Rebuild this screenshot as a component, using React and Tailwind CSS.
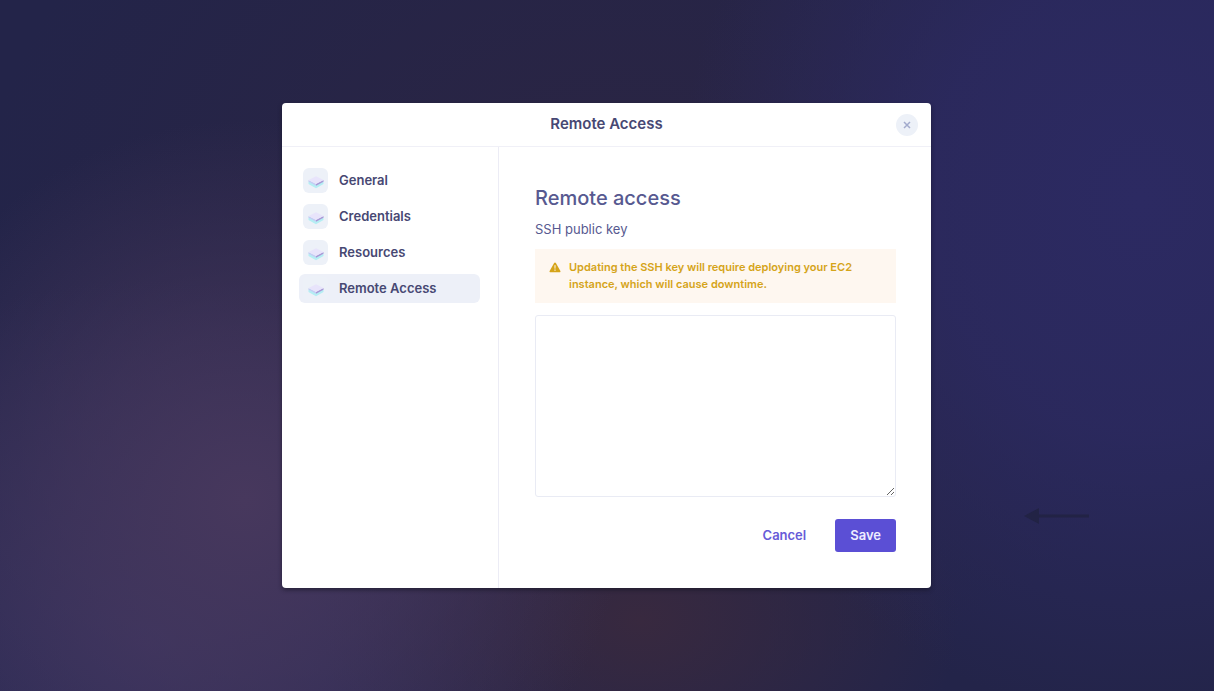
import React from "react";

const sections = ["General", "Credentials", "Resources", "Remote Access"];

function LayerIcon() {
  return (
    <svg viewBox="0 0 16 14" className="mt-0.5 h-3.5 w-4" aria-hidden="true">
      <path d="M.5 6.500 8 10 15.500 6.500 V9 L12 11 8 13.300 4 11 .5 9Z" fill="#b5eef3" />
      <path d="M8 8.700 15.500 5 V6.800 L8 10.800Z" fill="#a798d6" />
      <path d="M.5 5 8 8.700 V10.800 L.5 6.800Z" fill="#c3cdf4" />
      <path d="M8 1.200 15.500 5 8 9 .5 5Z" fill="#e8e4fb" />
    </svg>
  );
}

function SectionLink({ label, active }) {
  return (
    <a
      href="#"
      aria-current={active ? "page" : undefined}
      className={
        active
          ? "flex h-[29px] items-center gap-[11px] rounded-md bg-[#edf0f8] px-1"
          : "flex h-[29px] items-center gap-[11px] rounded-md px-1"
      }
    >
      <span className="flex size-[25px] items-center justify-center rounded-md bg-[#edf1f8]">
        <LayerIcon />
      </span>
      <span className="text-[13px] font-semibold">{label}</span>
    </a>
  );
}

export default function App() {
  return (
    <div className="relative flex min-h-screen items-center justify-center bg-[#232449] bg-[radial-gradient(ellipse_380px_380px_at_245px_500px,#47385d,#47385d99_45%,#47385d00),radial-gradient(ellipse_460px_520px_at_1140px_200px,#2c2a62,#2c2a62cc_45%,#2c2a6200),radial-gradient(ellipse_320px_220px_at_640px_620px,#38293f,#38293f00),radial-gradient(ellipse_460px_360px_at_150px_640px,#35315e,#35315e00),radial-gradient(ellipse_640px_480px_at_620px_220px,#2b2543,#2b254300)] pr-px font-['Inter','Liberation_Sans',sans-serif] text-[#474873]">
      <svg
        viewBox="0 0 66 18"
        className="absolute top-[507px] left-[1024px] h-[18px] w-[66px]"
        aria-hidden="true"
      >
        <path d="M0 9 15 1 V17Z M14 7.500 H65 V10.500 H14Z" fill="#222345" />
      </svg>

      <div
        role="dialog"
        aria-labelledby="dialog-title"
        className="w-full max-w-[649px] overflow-hidden rounded bg-white shadow-[0_2px_4px_rgba(20,20,35,0.6)]"
      >
        <header className="grid grid-cols-[1fr_auto_1fr] items-start border-b border-[#f0f0f7] px-[13px] pt-[11px] pb-2.5">
          <h1 id="dialog-title" className="col-start-2 text-[15px] leading-5 font-semibold">
            Remote Access
          </h1>
          <button
            type="button"
            aria-label="Close"
            className="flex size-[22px] items-center justify-center justify-self-end rounded-full bg-[#edf1f8]"
          >
            <svg viewBox="0 0 8 8" className="size-2" aria-hidden="true">
              <path d="M1 1 7 7 M7 1 1 7" stroke="#a3abcd" strokeWidth="1.500" fill="none" />
            </svg>
          </button>
        </header>

        <div className="flex">
          <nav className="flex w-[217px] shrink-0 flex-col gap-[7px] border-r border-[#ececf5] pt-[19px] pr-[18px] pl-[17px]">
            {sections.map((label) => (
              <SectionLink key={label} label={label} active={label === "Remote Access"} />
            ))}
          </nav>

          <form className="min-w-0 flex-1 pt-[35px] pr-[35px] pb-9 pl-9">
            <h2 className="text-xl leading-8 font-medium text-[#575990]">Remote access</h2>
            <label htmlFor="ssh-key" className="mt-[5px] block text-[13px] leading-5 text-[#575990]">
              SSH public key
            </label>
            <div
              role="alert"
              className="mt-2.5 flex gap-2 bg-[#fef7f0] px-3.5 py-2.5 text-[11px] leading-[17px] font-semibold text-[#d5a419]"
            >
              <svg viewBox="0 0 12 11" className="mt-[3px] h-[11px] w-3 shrink-0" aria-hidden="true">
                <path
                  d="M6 .5 Q6.600 .5 6.900 1 L11.400 9 Q11.900 10.200 10.700 10.300 H1.300 Q.1 10.200 .6 9 L5.100 1 Q5.400 .5 6 .5Z"
                  fill="#d5a419"
                />
                <path d="M5.400 3.300 H6.600 L6.400 6.700 H5.600Z M5.400 7.500 H6.600 V8.700 H5.400Z" fill="#fef7f0" />
              </svg>
              <p className="max-w-[300px]">
                Updating the SSH key will require deploying your EC2 instance, which will cause downtime.
              </p>
            </div>
            <textarea
              id="ssh-key"
              className="mt-3 block h-[182px] w-full rounded-[3px] border border-[#e9ebf4] bg-white p-2 text-[13px]"
            />
            <div className="mt-[22px] flex justify-end gap-3.5 text-[13px] font-semibold">
              <button type="button" className="h-[33px] px-[15px] text-[#675bd8]">
                Cancel
              </button>
              <button type="submit" className="h-[33px] rounded-[3px] bg-[#5b4fd5] px-[15px] text-[#eeecff]">
                Save
              </button>
            </div>
          </form>
        </div>
      </div>
    </div>
  );
}
